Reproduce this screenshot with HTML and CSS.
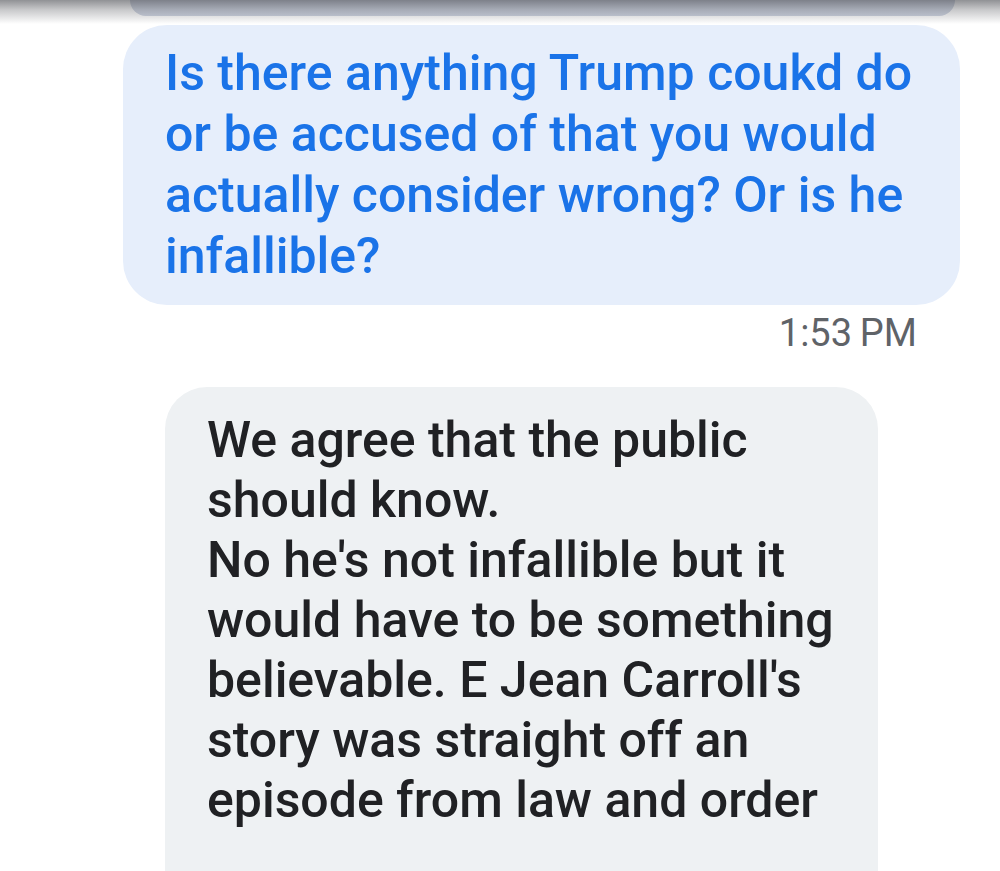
FILE: index.html
```html
<!DOCTYPE html>
<html><head><meta charset="utf-8"/><meta name="viewport" content="width=device-width, initial-scale=1"/>
<link rel="stylesheet" href="styles.css">
<title>Messages</title></head>
<body>
<div class="thread">
  <div class="topshade"></div>
  <div class="bubble prev"></div>
  <div class="bubble mine">
    Is there anything Trump coukd do<br>
    or be accused of that you would<br>
    actually consider wrong? Or is he<br>
    infallible?
  </div>
  <div class="stamp">1:53&#8201;PM</div>
  <div class="bubble theirs">
    We agree that the public<br>
    should know.<br>
    No he's not infallible but it<br>
    would have to be something<br>
    believable. E Jean Carroll's<br>
    story was straight off an<br>
    episode from law and order
  </div>
</div>
</body></html>
```

FILE: styles.css
```css
*{ padding:0; margin:0; box-sizing:border-box; }
body{ background:#fff; font-family:Roboto, "Noto Sans", sans-serif; overflow:hidden; }
.thread{ position:relative; height:871px; display:flex; flex-direction:column; }
.topshade{ position:absolute; left:0; right:0; top:0; height:24px; z-index:2;
  background:linear-gradient(to bottom, rgba(70,72,78,.6), rgba(70,72,78,.3) 40%, rgba(255,255,255,0)); }
.bubble{ font-weight:500; white-space:nowrap; }
.prev{ margin:0 45px 0 130px; height:16px; background:#d0d6e3; border-radius:0 0 30px 30px; }
.mine{ margin:9px 40px 0 123px; padding:18px 42px; background:#e6eefb; color:#1a73e8;
  border-radius:44px; font-size:50px; line-height:61px; }
.stamp{ align-self:flex-end; margin:8px 83px 0 0; font-size:38px; line-height:40px; color:#5f6368; }
.theirs{ margin:34px 0 0 165px; width:713px; flex:1; padding:23px 42px; background:#eef1f3; color:#202124;
  border-radius:42px 42px 0 0; font-size:50px; line-height:60px; }
```
